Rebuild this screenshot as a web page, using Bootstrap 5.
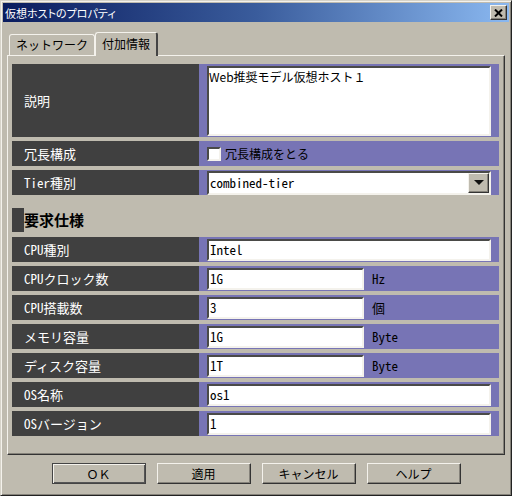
<!DOCTYPE html>
<html lang="ja">
<head>
<meta charset="utf-8">
<meta name="viewport" content="width=device-width, initial-scale=1">
<title>仮想ホストのプロパティ</title>
<link rel="stylesheet" href="https://cdn.jsdelivr.net/npm/bootstrap@5.3.0/dist/css/bootstrap.min.css">
<style>
:root{--face:#bfbbaf;--dark:#404040;--field:#7774b5;--light:#f4f2ec;--shade:#85827a;--ink:#000}
body{background:var(--face);color:var(--ink);font-family:"Noto Sans CJK JP",sans-serif;font-size:12px;line-height:16px;font-feature-settings:"hwid"}
.win{border:1px solid;border-color:#d6d3c9 #222 #222 #d6d3c9;box-shadow:inset 1px 1px var(--light),inset -1px -1px var(--shade);padding:2px 2px 11px}
.titlebar{height:19px;background:linear-gradient(90deg,#0a1c5e,#3a5c9c 50%,#8ab8f0);color:#fff;padding:0 2px}
.titlebar h1{font-size:11px;line-height:18px;font-feature-settings:"palt"}
.raised{background:var(--face);color:var(--ink);border:1px solid;border-color:var(--light) #333 #333 var(--light);box-shadow:inset -1px -1px var(--shade);border-radius:0}
.close-x{width:17px;height:15px}
.frame{padding:10px 4px 0}
.tabs{padding-left:2px}
.tabs .tab-btn{background:var(--face);color:var(--ink);border:1px solid var(--light);border-bottom:0;border-radius:3px 3px 0 0;font-size:12px;line-height:16px;height:21px;padding:0 6px}
.tabs .tab-btn.active{height:24px;padding:0 6px 2px;border-right:2px solid #444;margin-bottom:-1px;position:relative}
.panel{border:1px solid;border-color:var(--light) #333 #333 var(--light);box-shadow:inset -1px -1px var(--shade);padding:8px 5px 18px 4px}
.prop{min-height:25px;margin-bottom:4px}
.prop .name{width:187px;background:var(--dark);color:#fff;padding-left:12px;font-size:13px}
.prop .value{background:var(--field);padding:0 8px}
.sunken{background:#fff;color:var(--ink);border:2px solid;border-color:#4a4a48 var(--light) var(--light) #4a4a48;border-radius:0;padding:0 1px;font-size:13px;line-height:16px;height:22px;font-feature-settings:"hwid"}
textarea.sunken{height:70px;padding:1px 0;resize:none;display:block;font-size:12px;font-feature-settings:normal}
.sunken:focus{outline:1px dotted #000}
.amount{width:157px}
.unit{font-size:13px}
.combo{height:24px;appearance:none;width:100%}
.combo-arrow{position:absolute;right:2px;top:2px;width:21px;height:20px;pointer-events:none}
.tick{appearance:none;width:14px;height:14px;background:#fff;border:2px solid;border-color:#4a4a48 var(--light) var(--light) #4a4a48;margin:0}
.tick:checked{background:#222;box-shadow:inset 0 0 0 2px #fff}
.group-title{margin:13px 0 5px;font-size:15px;line-height:24px;font-weight:700}
.group-title::before{content:"";width:12px;height:24px;background:var(--dark)}
.actions{padding-top:8px;gap:11px}
.actions .raised{width:94px;height:21px;font-size:12px;line-height:16px;padding:0}
.actions .default{border-color:#444;box-shadow:inset 1px 1px var(--light),inset -1px -1px #555}
</style>
</head>
<body>
<main class="win min-vh-100 d-flex flex-column">
  <header class="titlebar d-flex align-items-center justify-content-between">
    <h1 class="m-0 fw-normal">仮想ホストのプロパティ</h1>
    <button type="button" class="raised close-x p-0 d-flex align-items-center justify-content-center" aria-label="閉じる">
      <svg width="9" height="8" viewBox="0 0 9 8" aria-hidden="true"><path d="M1 .5 8 7.5M8 .5 1 7.5" stroke="#000" stroke-width="2"/></svg>
    </button>
  </header>
  <form class="d-flex flex-column flex-grow-1">
    <div class="frame">
      <div class="tabs d-flex align-items-end" role="tablist">
        <button type="button" class="tab-btn" role="tab" aria-selected="false">ネットワーク</button>
        <button type="button" class="tab-btn active" role="tab" aria-selected="true">付加情報</button>
      </div>
      <div class="panel" role="tabpanel">
        <div class="prop d-flex">
          <label class="name d-flex align-items-center" for="desc">説明</label>
          <div class="value flex-grow-1 py-0 d-flex align-items-center" style="min-height:73px"><textarea id="desc" class="sunken w-100">Web推奨モデル仮想ホスト１</textarea></div>
        </div>
        <div class="prop d-flex">
          <div class="name d-flex align-items-center">冗長構成</div>
          <div class="value flex-grow-1 d-flex align-items-center gap-1"><input type="checkbox" id="redundant" class="tick"><label for="redundant">冗長構成をとる</label></div>
        </div>
        <div class="prop d-flex">
          <label class="name d-flex align-items-center" for="tier">Tier種別</label>
          <div class="value flex-grow-1 d-flex align-items-center">
            <div class="position-relative w-100"><select id="tier" class="sunken combo"><option>combined-tier</option></select>
              <span class="raised combo-arrow d-flex align-items-center justify-content-center"><svg width="10" height="5" viewBox="0 0 10 5" aria-hidden="true"><path d="M0 0h10L5 5z" fill="#111"/></svg></span></div>
          </div>
        </div>
        <h2 class="group-title d-flex align-items-center">要求仕様</h2>
        <div class="prop d-flex"><label class="name d-flex align-items-center" for="cpu">CPU種別</label><div class="value flex-grow-1 d-flex align-items-center"><input id="cpu" type="text" class="sunken w-100" value="Intel"></div></div>
        <div class="prop d-flex"><label class="name d-flex align-items-center" for="clock">CPUクロック数</label><div class="value flex-grow-1 d-flex align-items-center gap-2"><input id="clock" type="text" class="sunken amount" value="1G"><span class="unit">Hz</span></div></div>
        <div class="prop d-flex"><label class="name d-flex align-items-center" for="count">CPU搭載数</label><div class="value flex-grow-1 d-flex align-items-center gap-2"><input id="count" type="text" class="sunken amount" value="3"><span class="unit">個</span></div></div>
        <div class="prop d-flex"><label class="name d-flex align-items-center" for="mem">メモリ容量</label><div class="value flex-grow-1 d-flex align-items-center gap-2"><input id="mem" type="text" class="sunken amount" value="1G"><span class="unit">Byte</span></div></div>
        <div class="prop d-flex"><label class="name d-flex align-items-center" for="disk">ディスク容量</label><div class="value flex-grow-1 d-flex align-items-center gap-2"><input id="disk" type="text" class="sunken amount" value="1T"><span class="unit">Byte</span></div></div>
        <div class="prop d-flex"><label class="name d-flex align-items-center" for="os">OS名称</label><div class="value flex-grow-1 d-flex align-items-center"><input id="os" type="text" class="sunken w-100" value="os1"></div></div>
        <div class="prop d-flex mb-0"><label class="name d-flex align-items-center" for="osver">OSバージョン</label><div class="value flex-grow-1 d-flex align-items-center"><input id="osver" type="text" class="sunken w-100" value="1"></div></div>
      </div>
    </div>
    <footer class="actions d-flex justify-content-center">
      <button type="button" class="raised default">ＯＫ</button>
      <button type="button" class="raised">適用</button>
      <button type="button" class="raised">キャンセル</button>
      <button type="button" class="raised">ヘルプ</button>
    </footer>
  </form>
</main>
<script src="https://cdn.jsdelivr.net/npm/bootstrap@5.3.0/dist/js/bootstrap.bundle.min.js"></script>
</body>
</html>
